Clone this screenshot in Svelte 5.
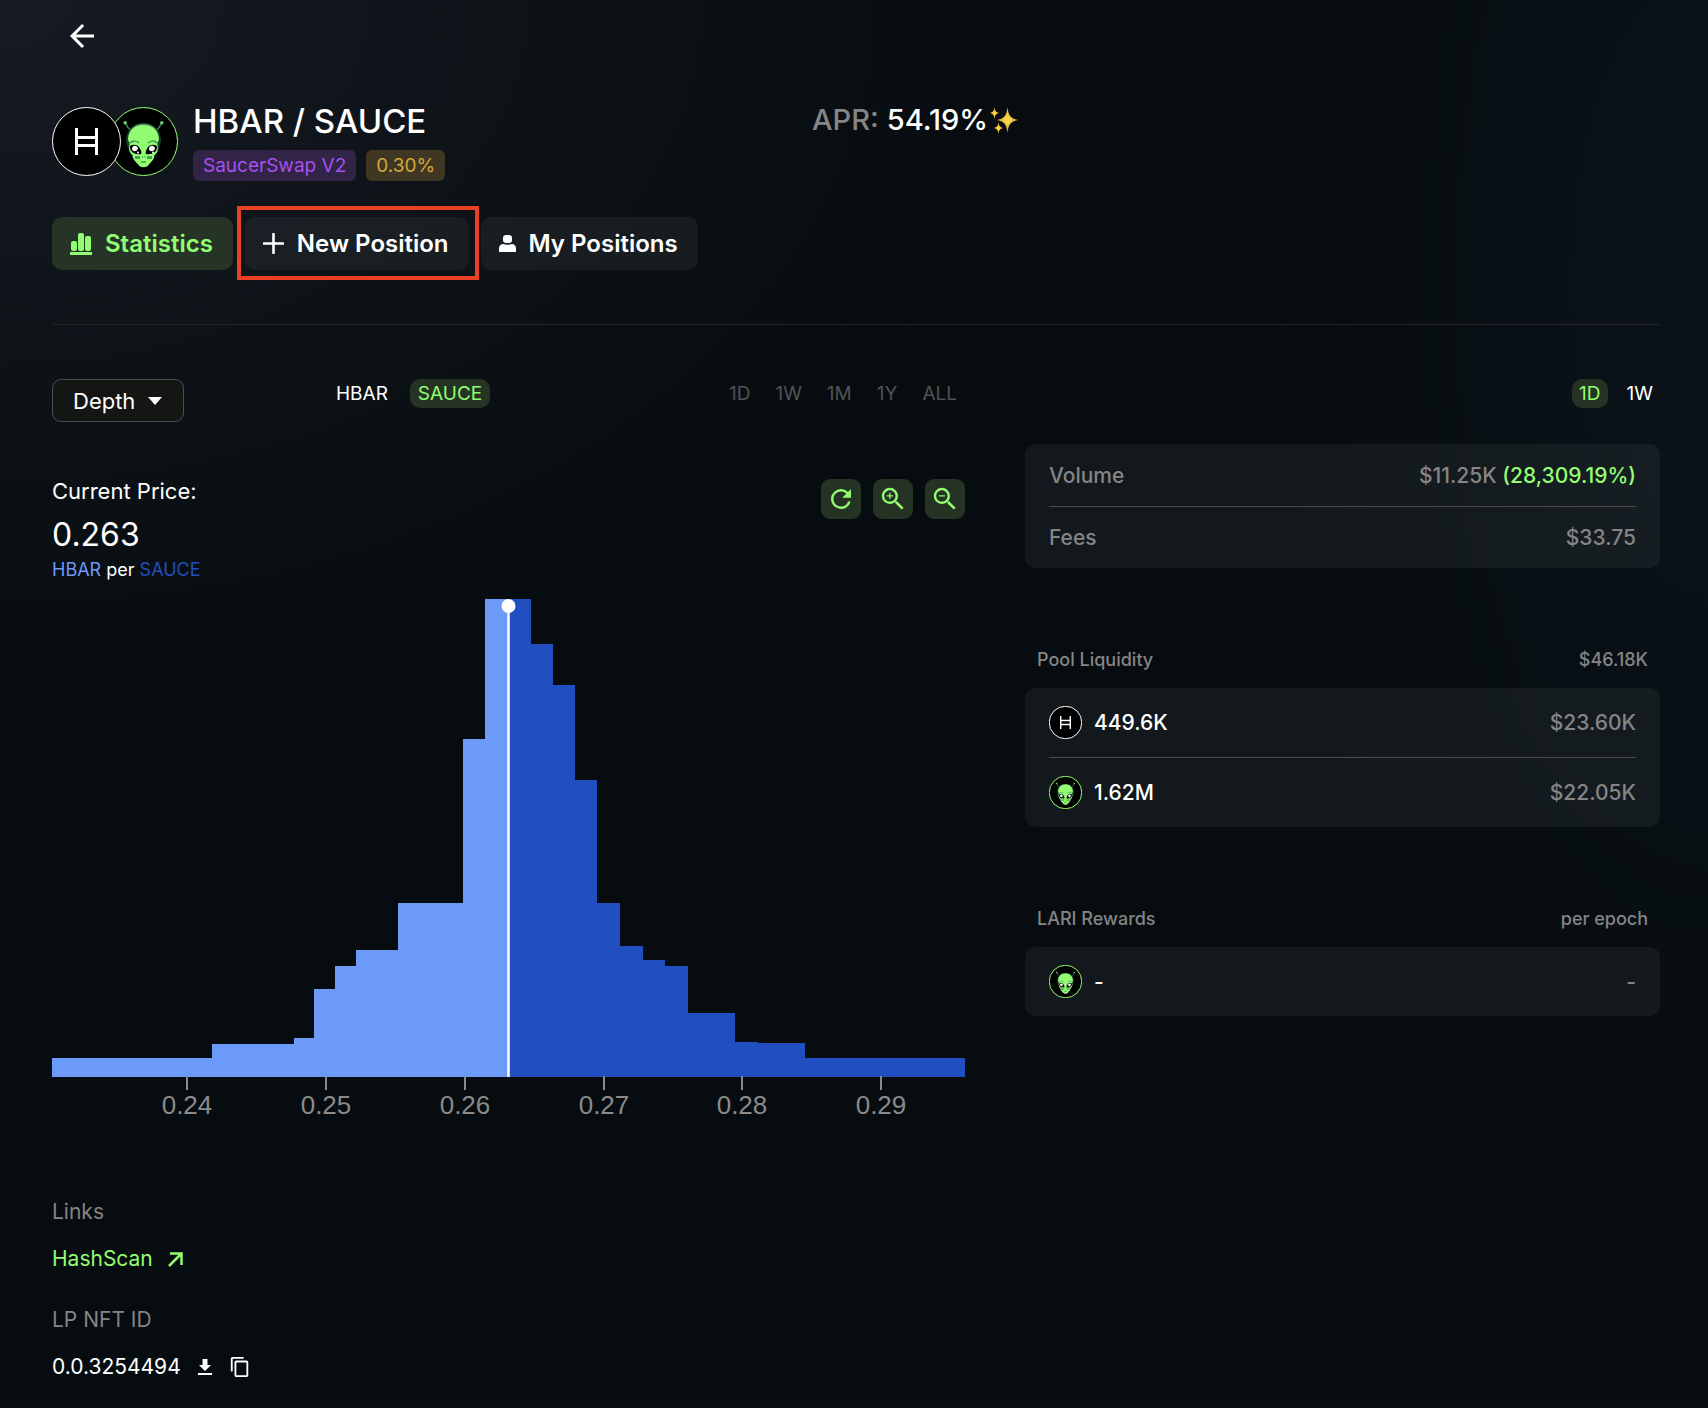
<script>
  let tab = $state("statistics");
  let token = $state("SAUCE");
  let period = $state("1D");

  const ranges = ["1D", "1W", "1M", "1Y", "ALL"];
  const periods = ["1D", "1W"];

  // Liquidity steps: [right edge, height], measured from the left end of the axis
  const below = [
    [160, 19], [242, 33], [262, 39], [283, 88], [304, 111], [346, 127],
    [411, 174], [433, 338], [456, 478]
  ];
  const above = [
    [479, 478], [501, 433], [523, 392], [545, 297], [568, 174], [591, 131],
    [613, 117], [636, 111], [683, 64], [706, 35], [753, 34], [913, 19]
  ];
  const ticks = [
    { x: 135, label: "0.24" },
    { x: 274, label: "0.25" },
    { x: 413, label: "0.26" },
    { x: 552, label: "0.27" },
    { x: 690, label: "0.28" },
    { x: 829, label: "0.29" }
  ];
  const base = 478;

  function stepPath(start, steps) {
    let d = `M${start} ${base}`;
    for (const [x, h] of steps) d += `V${base - h}H${x}`;
    return d + `V${base}Z`;
  }
</script>

{#snippet hbar()}
  <svg class="coin" viewBox="0 0 69 69" aria-hidden="true">
    <circle cx="34.5" cy="34.5" r="34" fill="#000" stroke="#fff" vector-effect="non-scaling-stroke" />
    <path d="M24.5 21v27M44.5 21v27M24.5 30.5h20M24.5 38.5h20" fill="none" stroke="#fff" stroke-width="3" />
  </svg>
{/snippet}

{#snippet alien()}
  <svg class="coin" viewBox="0 0 69 69" aria-hidden="true">
    <circle cx="34.5" cy="34.5" r="34" fill="#000" stroke="#93fd71" vector-effect="non-scaling-stroke" />
    <path d="M16.5 16l2 4 4 4M52.5 16l-2 4-4 4" fill="none" stroke="#3c7f55" stroke-width="1.6" />
    <circle cx="16.2" cy="15.7" r="1.7" fill="#6fd36a" />
    <circle cx="52.8" cy="15.7" r="1.7" fill="#6fd36a" />
    <path d="M17 34c0-10 6-17.5 17.5-17.5S52 24 52 34l-2 8H19z" fill="#17402c" />
    <path d="M20 26c3-7 8-9.5 14.5-9.5S46 19 49 26z" fill="#3f8a58" />
    <path d="M34.5 18C25 18 19.5 24 19 32c0 2 2 3 1.5 6-1 5 0 8 3 10 0 5 4 7 6 10 2 3 8 3 10 0 2-3 6-5 6-10 3-2 4-5 3-10-.5-3 1.5-4 1.5-6-.5-8-6-14-15.5-14z" fill="#93fd71" />
    <path d="M21 36c3-3 7-2 9 0M39 36c2-2 6-3 9 0" fill="none" stroke="#3c9a55" stroke-width="1.5" />
    <path d="M21 40c0-3 7-3 9 0s3 6 2 7c-6 1-11-2-11-7zM48 40c0-3-7-3-9 0s-3 6-2 7c6 1 11-2 11-7z" fill="#000" />
    <path d="M23 42c0-4 5-4 6-1 0 3-5 5-6 1zM40 42c0-4 5-4 6-1 0 3-5 5-6 1z" fill="#fff" />
    <circle cx="29" cy="45.5" r="1" fill="#fff" />
    <circle cx="44" cy="45.5" r="1" fill="#fff" />
    <path d="M26 50.5h5M38 50.5h5" stroke="#3c8f62" stroke-width="2.5" />
    <path d="M33 50h1M35.5 50h1M32 55h5" stroke="#1c6a3c" stroke-width="1.2" />
  </svg>
{/snippet}

<main class="page">
  <button class="back" aria-label="Back">
    <svg viewBox="0 0 24 24" width="36" height="36"><path fill="currentColor" d="M20 11H7.83l5.59-5.59L12 4l-8 8 8 8 1.41-1.41L7.83 13H20v-2z" /></svg>
  </button>

  <header class="pool">
    <div class="identity">
      <div class="pair">
        {@render hbar()}
        {@render alien()}
      </div>
      <div>
        <h1>HBAR / SAUCE</h1>
        <div class="badges">
          <span class="badge dex">SaucerSwap V2</span>
          <span class="badge fee">0.30%</span>
        </div>
      </div>
    </div>
    <div class="apr">
      <span class="muted">APR:</span>
      <span>54.19%</span>
      <svg viewBox="0 0 28 28" width="28" height="28" aria-hidden="true">
        <defs>
          <radialGradient id="glow">
            <stop offset="0" stop-color="#ffe14d" />
            <stop offset="1" stop-color="#e39a35" />
          </radialGradient>
        </defs>
        <g fill="url(#glow)">
          <path d="M17.5 1c1 8 2.5 11.5 10.5 13-8 1.5-9.5 5-10.5 13-1-8-2.5-11.5-10.5-13 8-1.5 9.5-5 10.5-13z" />
          <path d="M4.5 1c.5 4 1.5 5 4.5 6-3 1-4 2-4.5 6C4 9 3 8 0 7c3-1 4-2 4.5-6z" />
          <path d="M8.5 16c.5 4 1.5 5 4.5 6-3 1-4 2-4.5 6-.5-4-1.5-5-4.5-6 3-1 4-2 4.5-6z" />
        </g>
      </svg>
    </div>
  </header>

  <nav class="tabs">
    <button class="tab" class:active={tab === "statistics"} onclick={() => (tab = "statistics")}>
      <svg viewBox="0 0 22 22" width="22" height="22" fill="currentColor" aria-hidden="true">
        <rect x="1" y="8" width="6" height="10" rx="2" />
        <rect x="8" y="0" width="6" height="18" rx="2" />
        <rect x="15" y="3" width="6" height="15" rx="2" />
        <rect y="19" width="22" height="3" />
      </svg>
      Statistics
    </button>
    <div class="marked">
      <button class="tab" class:active={tab === "new"} onclick={() => (tab = "new")}>
        <svg viewBox="0 0 21 21" width="21" height="21" aria-hidden="true"><path d="M10.5 1v19M1 10.5h19" stroke="currentColor" stroke-width="2.6" stroke-linecap="round" /></svg>
        New Position
      </button>
    </div>
    <button class="tab" class:active={tab === "mine"} onclick={() => (tab = "mine")}>
      <svg viewBox="0 0 17 17" width="17" height="17" fill="currentColor" aria-hidden="true">
        <rect x="4" y="0" width="9" height="8" rx="3" />
        <path d="M0 17v-4c0-2 2-4 4-4 3 1 6 1 9 0 2 0 4 2 4 4v4z" />
      </svg>
      My Positions
    </button>
  </nav>

  <div class="columns">
    <section>
      <div class="chart-head">
        <div class="chart-kind">
          <div class="select">
            <select aria-label="Chart type">
              <option>Depth</option>
            </select>
            <svg viewBox="0 0 14 8" width="14" height="8" aria-hidden="true"><path d="M0 0h14L7 8z" fill="#fff" /></svg>
          </div>
          <div class="tokens">
            {#each ["HBAR", "SAUCE"] as name}
              <button class="pill" class:active={token === name} onclick={() => (token = name)}>{name}</button>
            {/each}
          </div>
        </div>
        <div class="ranges">
          {#each ranges as range}
            <button class="pill" disabled>{range}</button>
          {/each}
        </div>
      </div>

      <div class="price-row">
        <div>
          <div class="price-label">Current Price:</div>
          <div class="price">0.263</div>
          <div class="unit"><span class="hbar-name">HBAR</span> per <span class="sauce-name">SAUCE</span></div>
        </div>
        <div class="zoom">
          <button aria-label="Reset">
            <svg viewBox="0 0 24 24" width="30" height="30"><path fill="currentColor" d="M17.65 6.35A7.96 7.96 0 0 0 12 4a8 8 0 1 0 7.73 10h-2.08A5.99 5.99 0 0 1 12 18c-3.31 0-6-2.69-6-6s2.69-6 6-6c1.66 0 3.14.69 4.22 1.78L13 11h7V4l-2.35 2.35z" /></svg>
          </button>
          <button aria-label="Zoom in">
            <svg viewBox="0 0 24 24" width="30" height="30"><path fill="currentColor" d="M15.5 14h-.79l-.28-.27A6.47 6.47 0 0 0 16 9.5 6.5 6.5 0 1 0 9.5 16c1.61 0 3.09-.59 4.23-1.57l.27.28v.79l5 4.99L20.49 19l-4.99-5zm-6 0C7.01 14 5 11.99 5 9.5S7.01 5 9.5 5 14 7.01 14 9.5 11.99 14 9.5 14zm2.5-4h-2v2H9v-2H7V9h2V7h1v2h2v1z" /></svg>
          </button>
          <button aria-label="Zoom out">
            <svg viewBox="0 0 24 24" width="30" height="30"><path fill="currentColor" d="M15.5 14h-.79l-.28-.27A6.47 6.47 0 0 0 16 9.5 6.5 6.5 0 1 0 9.5 16c1.61 0 3.09-.59 4.23-1.57l.27.28v.79l5 4.99L20.49 19l-4.99-5zm-6 0C7.01 14 5 11.99 5 9.5S7.01 5 9.5 5 14 7.01 14 9.5 11.99 14 9.5 14zM7 9h5v1H7z" /></svg>
          </button>
        </div>
      </div>

      <svg class="chart" viewBox="0 0 913 521" role="img" aria-label="Liquidity depth">
        <path d={stepPath(0, below)} fill="#6b9af8" />
        <path d={stepPath(456, above)} fill="#214fbf" />
        <path d="M456.5 7V478" stroke="#fff" stroke-width="2.5" />
        <circle cx="456.5" cy="7" r="7" fill="#fff" />
        {#each ticks as tick}
          <path d="M{tick.x} 477v14" stroke="#8a8a8a" stroke-width="2" />
          <text x={tick.x} y="515">{tick.label}</text>
        {/each}
      </svg>

      <div class="links">
        <h2>Links</h2>
        <a href="#hashscan">
          HashScan
          <svg viewBox="0 0 15 15" width="15" height="15" aria-hidden="true"><path d="M2 1.5h11.5V13M13 2L1 14" fill="none" stroke="currentColor" stroke-width="2.5" /></svg>
        </a>
        <h2>LP NFT ID</h2>
        <div class="nft">
          0.0.3254494
          <button aria-label="Download">
            <svg viewBox="0 0 14 17" width="14" height="17" fill="currentColor"><path d="M4.5 0h5v6H13l-6 6-6-6h3.5zM0 14h14v2H0z" /></svg>
          </button>
          <button aria-label="Copy">
            <svg viewBox="0 0 24 24" width="22" height="22"><path fill="currentColor" d="M16 1H4c-1.1 0-2 .9-2 2v14h2V3h12V1zm3 4H8c-1.1 0-2 .9-2 2v14c0 1.1.9 2 2 2h11c1.1 0 2-.9 2-2V7c0-1.1-.9-2-2-2zm0 16H8V7h11v14z" /></svg>
          </button>
        </div>
      </div>
    </section>

    <aside>
      <div class="periods">
        {#each periods as item}
          <button class="pill" class:active={period === item} onclick={() => (period = item)}>{item}</button>
        {/each}
      </div>
      <div class="card">
        <div class="row">
          <span>Volume</span>
          <span>$11.25K <span class="green">(28,309.19%)</span></span>
        </div>
        <div class="row">
          <span>Fees</span>
          <span>$33.75</span>
        </div>
      </div>

      <div class="caption"><span>Pool Liquidity</span><span>$46.18K</span></div>
      <div class="card">
        <div class="row tall">
          <span class="amount">{@render hbar()}449.6K</span>
          <span>$23.60K</span>
        </div>
        <div class="row tall">
          <span class="amount">{@render alien()}1.62M</span>
          <span>$22.05K</span>
        </div>
      </div>

      <div class="caption"><span>LARI Rewards</span><span>per epoch</span></div>
      <div class="card">
        <div class="row tall">
          <span class="amount">{@render alien()}-</span>
          <span>-</span>
        </div>
      </div>
    </aside>
  </div>
</main>

<style>
  :global(body) {
    background: #070c0f;
  }

  .page {
    box-sizing: border-box;
    min-height: 100vh;
    padding: 18px 48px 28px 52px;
    font-family: Inter, "Liberation Sans", sans-serif;
    color: #fff;
    background:
      radial-gradient(ellipse 60% 50% at 0% 0%, #161a22 0%, transparent 100%),
      radial-gradient(ellipse 25% 70% at 100% 20%, #0b131a 0%, transparent 100%),
      #060c0f;
  }

  button,
  select {
    font: inherit;
    color: inherit;
    border: 0;
    padding: 0;
    background: none;
    cursor: pointer;
  }
  svg {
    display: block;
    flex: none;
  }
  .muted {
    color: #858585;
  }
  .green {
    color: #93fd71;
  }

  /* Header */
  .back {
    display: block;
    margin: 0 0 48px 12px;
  }
  .pool {
    display: grid;
    grid-template-columns: 760fr 848fr;
    align-items: start;
  }
  .identity {
    display: flex;
    gap: 15px;
  }
  .pair {
    display: flex;
    padding-top: 5px;
  }
  .pair .coin {
    width: 69px;
    height: 69px;
    position: relative;
    z-index: 1;
  }
  .pair .coin + .coin {
    margin-left: -12px;
    z-index: 0;
  }
  h1 {
    margin: 0 0 10px;
    font-size: 33px;
    line-height: 38px;
    font-weight: 500;
  }
  .badges {
    display: flex;
    gap: 10px;
  }
  .badge {
    padding: 0 10px;
    border-radius: 6px;
    font-size: 19px;
    line-height: 31px;
  }
  .dex {
    color: #a94ff0;
    background: #322447;
  }
  .fee {
    color: #d2a93a;
    background: #403722;
  }
  .apr {
    display: flex;
    align-items: center;
    gap: 8px;
    font-size: 29px;
    line-height: 36px;
    font-weight: 500;
  }
  .apr svg {
    margin-left: -6px;
  }

  /* Tabs */
  .tabs {
    display: flex;
    gap: 12px;
    margin-top: 36px;
    padding-bottom: 54px;
    border-bottom: 1px solid #232427;
  }
  .tab {
    display: flex;
    align-items: center;
    gap: 13px;
    padding: 0 20px 0 18px;
    border-radius: 10px;
    font-size: 24px;
    line-height: 53px;
    font-weight: 600;
    background: rgb(255 255 255 / 5%);
  }
  .tab.active {
    color: #93fd71;
    background: #263428;
  }
  .marked {
    position: relative;
  }
  .marked::after {
    content: "";
    position: absolute;
    inset: -11px -10px -10px -8px;
    border: 4px solid #ea4025;
    pointer-events: none;
  }

  /* Columns */
  .columns {
    display: grid;
    grid-template-columns: 913fr 635fr;
    gap: 60px;
    padding-top: 54px;
  }
  .chart-head,
  .chart-kind {
    display: flex;
    justify-content: space-between;
    align-items: flex-start;
  }
  .chart-kind {
    width: 48%;
  }
  .select {
    position: relative;
  }
  .select select {
    appearance: none;
    width: 132px;
    height: 43px;
    padding: 0 36px 0 20px;
    border: 1px solid #4d4d4d;
    border-radius: 9px;
    background: #141614;
    font-size: 22px;
  }
  .select svg {
    position: absolute;
    right: 22px;
    top: 18px;
    pointer-events: none;
  }
  .pill {
    padding: 0 8px;
    border-radius: 10px;
    font-size: 19px;
    line-height: 29px;
    font-weight: 400;
  }
  .pill.active {
    color: #93fd71;
    background: #253324;
  }
  .pill:disabled {
    color: #4f5355;
    cursor: default;
  }
  .tokens {
    display: flex;
    gap: 14px;
  }
  .ranges {
    display: flex;
    gap: 9px;
  }
  .periods {
    display: flex;
    justify-content: flex-end;
    gap: 12px;
    margin-bottom: 36px;
  }
  .periods .pill {
    padding: 0 7px;
  }

  .price-row {
    display: flex;
    justify-content: space-between;
    align-items: flex-start;
    margin-top: 54px;
  }
  .price-label {
    font-size: 22px;
    line-height: 30px;
  }
  .price {
    margin-top: 7px;
    font-size: 32px;
    line-height: 44px;
  }
  .unit {
    font-size: 18px;
    line-height: 26px;
  }
  .hbar-name {
    color: #6b9af8;
  }
  .sauce-name {
    color: #214fbf;
  }
  .zoom {
    display: flex;
    gap: 12px;
    padding-top: 3px;
  }
  .zoom button {
    display: grid;
    place-items: center;
    width: 40px;
    height: 40px;
    border-radius: 9px;
    color: #93fd71;
    background: #253324;
  }

  .chart {
    width: 100%;
    margin-top: 16px;
  }
  .chart text {
    fill: #8a8a8a;
    font-family: "Liberation Sans", sans-serif;
    font-size: 26px;
    text-anchor: middle;
  }

  .links {
    margin-top: 78px;
    font-size: 21px;
    line-height: 28px;
  }
  .links h2 {
    margin: 0 0 19px;
    font-size: 21px;
    font-weight: 400;
    color: #858585;
  }
  .links a {
    display: flex;
    align-items: center;
    gap: 15px;
    margin-bottom: 33px;
    color: #93fd71;
    text-decoration: none;
  }
  .nft {
    display: flex;
    align-items: center;
    gap: 17px;
  }

  /* Side cards */
  .card {
    padding: 0 24px;
    border-radius: 10px;
    background: rgb(255 255 255 / 5%);
  }
  .row {
    box-sizing: border-box;
    display: flex;
    justify-content: space-between;
    align-items: center;
    height: 62px;
    font-size: 21px;
    font-weight: 500;
    color: #858585;
  }
  .row + .row {
    border-top: 1px solid #4b4b4b;
  }
  .tall {
    box-sizing: content-box;
    height: 69px;
  }
  .amount {
    display: flex;
    align-items: center;
    gap: 12px;
    color: #fff;
  }
  .amount .coin {
    width: 33px;
    height: 33px;
  }
  .caption {
    display: flex;
    justify-content: space-between;
    margin: 79px 12px 16px;
    font-size: 18px;
    line-height: 25px;
    font-weight: 500;
    color: #858585;
  }
</style>
